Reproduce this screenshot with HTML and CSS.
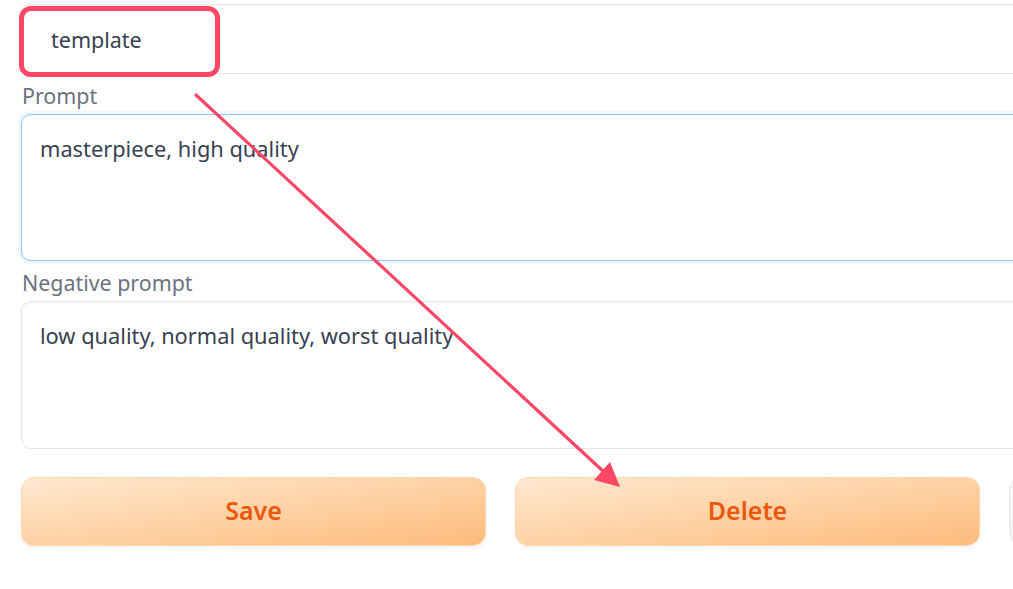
FILE: index.html
```html
<!DOCTYPE html>
<html>
<head>
<meta charset="utf-8">
<link rel="stylesheet" href="styles.css">
</head>
<body>
<div class="page">
  <div class="form">
    <div class="textbox name-box">template</div>
    <label class="label">Prompt</label>
    <div class="textarea focused">masterpiece, high quality</div>
    <label class="label">Negative prompt</label>
    <div class="textarea">low quality, normal quality, worst quality</div>
    <div class="buttons">
      <button class="btn primary">Save</button>
      <button class="btn primary">Delete</button>
      <button class="btn secondary" aria-label="More"></button>
    </div>
  </div>
  <div class="highlight"></div>
  <svg class="arrow" width="1013" height="589" viewBox="0 0 1013 589">
    <line x1="196" y1="95" x2="604" y2="472" stroke="#fd4766" stroke-width="3.2" stroke-linecap="round"/>
    <polygon points="620,487 610,462 594,480" fill="#fd4766"/>
  </svg>
</div>
</body>
</html>
```
FILE: styles.css
```css
html, body {
  margin: 0;
  padding: 0;
  background: #ffffff;
  overflow: hidden;
}
body {
  width: 1013px;
  height: 589px;
  font-family: "Noto Sans", "Open Sans", sans-serif;
}
.page {
  position: relative;
  width: 1013px;
  height: 589px;
  overflow: hidden;
}
.form {
  display: flex;
  flex-direction: column;
  width: 1150px;
  padding: 4px 0 0 21px;
}
.textbox {
  height: 70px;
  box-sizing: border-box;
  border: 1px solid #e5e7eb;
  border-radius: 8px;
  display: flex;
  align-items: center;
  padding-left: 29px;
  font-size: 21.5px;
  color: #374151;
  box-shadow: 0 1px 2px rgba(0,0,0,0.04) inset;
}
.label {
  display: block;
  margin: 10px 0 6px 1px;
  height: 24px;
  line-height: 24px;
  font-size: 21.4px;
  color: #6b7280;
}
.textarea {
  height: 148px;
  box-sizing: border-box;
  border: 1px solid #e5e7eb;
  border-radius: 10px;
  padding: 19px 18px;
  font-size: 21.8px;
  line-height: 30px;
  color: #374151;
  box-shadow: 0 1px 3px rgba(0,0,0,0.04) inset;
}
.textarea.focused {
  height: 147px;
  border-color: #93c5fd;
  box-shadow: 0 0 0 3px #eef6fe, 0 1px 3px rgba(0,0,0,0.04) inset;
}
.buttons {
  display: flex;
  gap: 29px;
  margin-top: 28px;
}
.btn {
  flex: 0 0 465px;
  height: 69px;
  padding: 0 0 4px 0;
  border-radius: 13px;
  font-family: inherit;
  font-size: 25px;
  font-weight: 600;
  cursor: pointer;
}
.btn.primary {
  border: 1px solid #fed7aa;
  background: linear-gradient(to bottom right, #ffe9d0, #fdbb7b);
  color: #ea580c;
  box-shadow: 0 2px 4px rgba(0,0,0,0.06);
}
.btn.secondary {
  border: 1px solid #e5e7eb;
  background: linear-gradient(to bottom right, #f9fafb, #e5e7eb);
  color: #374151;
}
.highlight {
  position: absolute;
  left: 19px;
  top: 6px;
  width: 201px;
  height: 71px;
  box-sizing: border-box;
  border: 5px solid #fd4766;
  border-radius: 12px;
}
.arrow {
  position: absolute;
  left: 0;
  top: 0;
  pointer-events: none;
}
```
